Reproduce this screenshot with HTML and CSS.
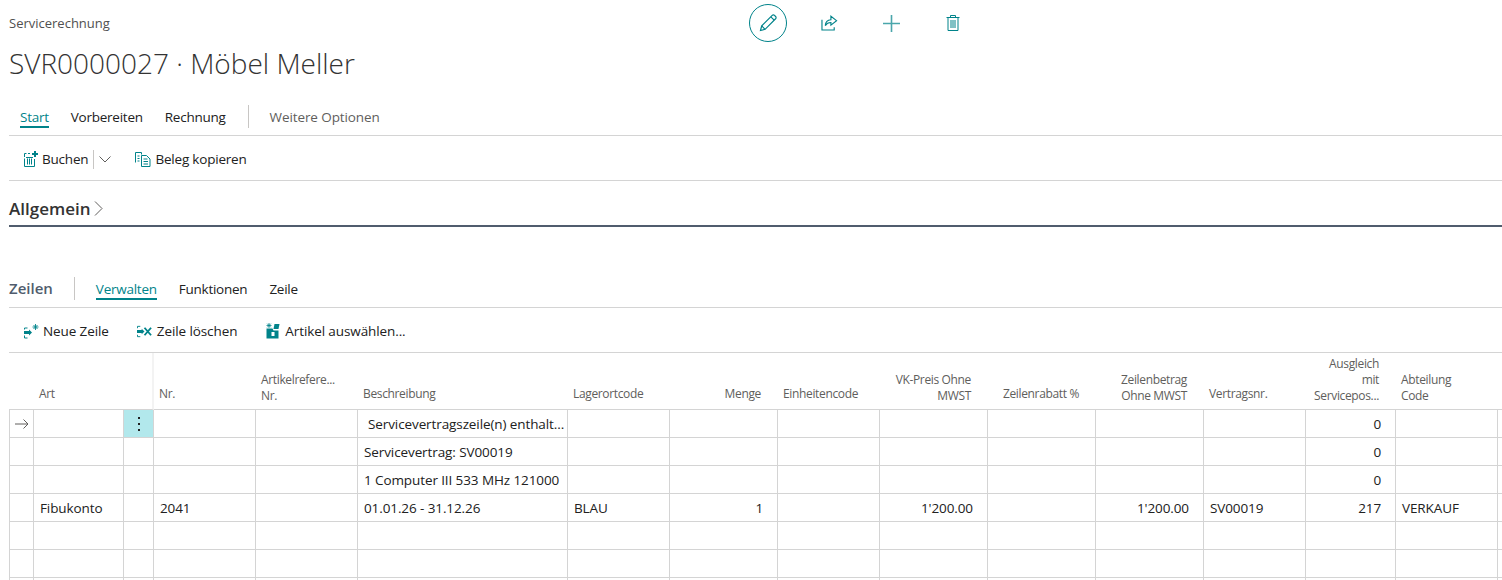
FILE: index.html
```html
<!DOCTYPE html>
<html lang="de">
<head>
    <meta charset="UTF-8">
    <title>Servicerechnung</title>
    <link rel="stylesheet" href="styles.css">
</head>
<body>
    <!-- Page header -->
    <header class="page-header">
        <div class="title-block">
            <div class="caption">Servicerechnung</div>
            <h1>SVR0000027 · Möbel Meller</h1>
        </div>
        <div class="page-actions">
            <span class="edit-btn">
                <svg width="20" height="20" viewBox="0 0 20 20" fill="none" stroke="#00838a" stroke-width="1.2"><path d="M2.5 17.5l1.2-4.6L14.2 2.4a1.6 1.6 0 0 1 2.3 0l1.1 1.1a1.6 1.6 0 0 1 0 2.3L7.100 16.300z"/><path d="M3.700 12.900l3.400 3.400M12.800 3.800l3.400 3.400"/></svg>
            </span>
            <span class="page-icon share-icon">
                <svg width="17" height="16" viewBox="0 0 18 17" fill="none" stroke="#00838a" stroke-width="1.2"><path d="M1 5v11h13v-3"/><path d="M10.500 1.300l6 4.700-6 4.700V8c-2.500 0-4.500.8-6 3.300.2-3.700 2.500-6.100 6-6.300z"/></svg>
            </span>
            <span class="page-icon plus-icon">
                <svg width="17" height="17" viewBox="0 0 17 17" stroke="#4aa6ab" stroke-width="1.6"><path d="M8.500 0v17M0 8.500h17"/></svg>
            </span>
            <span class="page-icon trash-icon">
                <svg width="14" height="16" viewBox="0 0 14 16" fill="none" stroke="#00838a" stroke-width="1"><path d="M.5 2.500h13M4.500 2.500V.5h5v2M2 2.500v13h10v-13M5 5v8M7 5v8M9 5v8"/></svg>
            </span>
        </div>
    </header>

    <!-- Main action tabs -->
    <nav class="tabs main-tabs">
        <a class="tab active">Start</a>
        <a class="tab">Vorbereiten</a>
        <a class="tab">Rechnung</a>
        <span class="tab-sep"></span>
        <a class="tab muted">Weitere Optionen</a>
    </nav>

    <div class="toolbar toolbar-top">
        <span class="tool tool-split">
            <svg width="15" height="16" viewBox="0 0 15 16" fill="none" stroke="#00838a"><path d="M.5 6V2.500h2M4 2.500h2M.5 7.500v8h10V8M3.500 7.500v6M5.500 7.500v6M7.500 7.500v6M2 6.500h7"/><path d="M11 0v6M8 3h6" stroke-width="2"/></svg>
            <span>Buchen</span>
        </span>
        <span class="split-sep"></span>
        <svg class="split-chevron" width="12" height="7" viewBox="0 0 12 7" fill="none" stroke="#605e5c"><path d="M.5.5L6 6l5.500-5.500"/></svg>
        <span class="tool tool-copy">
            <svg width="16" height="15" viewBox="0 0 16 15" fill="none" stroke="#00838a"><path d="M.5 10.500V.5h6v2M2.500 4h2M2.500 6.500h2M2.500 9h2"/><path d="M6.500 3.500h5l3.500 3.500v7.500H6.500zM8.500 7h4M8.500 9.500h4.500M8.500 12h4.500"/></svg>
            <span>Beleg kopieren</span>
        </span>
    </div>

    <!-- Allgemein section -->
    <section class="fasttab">
        <h2>Allgemein</h2>
        <svg width="9" height="15" viewBox="0 0 9 15" fill="none" stroke="#605e5c"><path d="M1 .5l7 7-7 7"/></svg>
    </section>

    <!-- Lines -->
    <nav class="tabs lines-tabs">
        <span class="lines-title">Zeilen</span>
        <span class="tab-sep"></span>
        <a class="tab active">Verwalten</a>
        <a class="tab">Funktionen</a>
        <a class="tab">Zeile</a>
    </nav>

    <div class="toolbar toolbar-lines">
        <span class="tool">
            <svg width="16" height="15" viewBox="0 0 16 15" fill="none" stroke="#00838a"><path d="M.5 5.500V4h3M.5 11.500V14h3"/><path d="M0 7h5V5.500L8 8.500l-3 3V10H0z" fill="#00838a" stroke="none"/><path d="M11.500 0v6M8.500 3h6M9.500 1l4 4M13.500 1l-4 4" stroke-width=".9"/></svg>
            <span>Neue Zeile</span>
        </span>
        <span class="tool">
            <svg width="15" height="13" viewBox="0 0 16 13" fill="none" stroke="#00838a"><path d="M.5 3V1h3M.5 10v2h3"/><path d="M0 5h5V3.500L8 6.500l-3 3V8H0z" fill="#00838a" stroke="none"/><path d="M8 2.500l7 8M15 2.500l-7 8" stroke-width="2"/></svg>
            <span>Zeile löschen</span>
        </span>
        <span class="tool">
            <svg width="15" height="16" viewBox="0 0 14 16"><path d="M1 5.500h6l1 2h5v8H1z" fill="#00838a"/><rect x="6" y="9" width="3" height="4" fill="#fff"/><path d="M9 1h5l-1 5H8z" fill="#00838a"/><path d="M3.500 0v5M1 2.500h5M1.700.7l3.600 3.600M5.300.7L1.700 4.300" stroke="#00838a" stroke-width=".8"/></svg>
            <span>Artikel auswählen...</span>
        </span>
    </div>

    <table class="lines">
        <colgroup>
            <col class="w25"><col class="w90"><col class="w30"><col class="w102"><col class="w102">
            <col class="w210"><col class="w102"><col class="w108"><col class="w102"><col class="w108">
            <col class="w108"><col class="w108"><col class="w102"><col class="w90"><col class="w102">
            <col class="w4">
        </colgroup>
        <thead>
            <tr>
                <th></th>
                <th>Art</th>
                <th class="freeze"></th>
                <th>Nr.</th>
                <th class="multi">Artikelrefere...<br>Nr.</th>
                <th>Beschreibung</th>
                <th>Lagerortcode</th>
                <th class="num">Menge</th>
                <th>Einheitencode</th>
                <th class="num multi">VK-Preis Ohne<br>MWST</th>
                <th class="num">Zeilenrabatt %</th>
                <th class="num multi">Zeilenbetrag<br>Ohne MWST</th>
                <th>Vertragsnr.</th>
                <th class="num multi">Ausgleich<br>mit<br>Servicepos...</th>
                <th class="multi">Abteilung<br>Code</th>
                <th class="end"></th>
            </tr>
        </thead>
        <tbody>
            <tr>
                <td class="marker"><svg width="14" height="10" viewBox="0 0 14 10" fill="none" stroke="#605e5c"><path d="M0 5h13M8.500.5L13 5l-4.500 4.500"/></svg></td>
                <td></td>
                <td class="row-menu"><span class="dots"><i></i><i></i><i></i></span></td>
                <td></td><td></td>
                <td class="indent">Servicevertragszeile(n) enthalt...</td>
                <td></td><td></td><td></td><td></td><td></td><td></td><td></td>
                <td class="num">0</td><td></td><td class="end"></td>
            </tr>
            <tr>
                <td></td><td></td><td></td><td></td><td></td>
                <td>Servicevertrag: SV00019</td>
                <td></td><td></td><td></td><td></td><td></td><td></td><td></td>
                <td class="num">0</td><td></td><td class="end"></td>
            </tr>
            <tr>
                <td></td><td></td><td></td><td></td><td></td>
                <td>1 Computer III 533 MHz 121000</td>
                <td></td><td></td><td></td><td></td><td></td><td></td><td></td>
                <td class="num">0</td><td></td><td class="end"></td>
            </tr>
            <tr>
                <td></td><td>Fibukonto</td><td></td><td>2041</td><td></td>
                <td>01.01.26 - 31.12.26</td>
                <td>BLAU</td>
                <td class="num">1</td>
                <td></td>
                <td class="num">1'200.00</td>
                <td></td>
                <td class="num">1'200.00</td>
                <td>SV00019</td>
                <td class="num">217</td>
                <td>VERKAUF</td><td class="end"></td>
            </tr>
            <tr><td></td><td></td><td></td><td></td><td></td><td></td><td></td><td></td><td></td><td></td><td></td><td></td><td></td><td></td><td></td><td class="end"></td></tr>
            <tr><td></td><td></td><td></td><td></td><td></td><td></td><td></td><td></td><td></td><td></td><td></td><td></td><td></td><td></td><td></td><td class="end"></td></tr>
            <tr><td></td><td></td><td></td><td></td><td></td><td></td><td></td><td></td><td></td><td></td><td></td><td></td><td></td><td></td><td></td><td class="end"></td></tr>
        </tbody>
    </table>
</body>
</html>
```

FILE: styles.css
```css
* {
    margin: 0;
    padding: 0;
    box-sizing: border-box;
}

html, body {
    height: 100%;
    overflow: hidden;
}

body {
    background-color: #fff;
    color: #212121;
    font-family: 'Open Sans', 'Noto Sans', sans-serif;
    font-size: 13.5px;
    letter-spacing: -0.1px;
    padding-left: 9px;
}

.page-header {
    display: flex;
    height: 98px;
}

.title-block {
    width: 740px;
}

.caption {
    font-size: 13px;
    letter-spacing: 0;
    color: #505050;
    padding-top: 14px;
    line-height: 18px;
}

h1 {
    font-size: 28px;
    font-weight: 300;
    line-height: 38px;
    margin-top: 12px;
    letter-spacing: 0;
    color: #333;
}

.page-actions {
    display: flex;
    align-items: center;
    height: 46px;
}

.edit-btn {
    width: 38px;
    height: 38px;
    border: 1px solid #00838a;
    border-radius: 50%;
    display: flex;
    align-items: center;
    justify-content: center;
}

.page-icon {
    display: flex;
}

.share-icon { margin-left: 34px; }
.plus-icon { margin-left: 45px; }
.trash-icon { margin-left: 46px; }

.tabs {
    display: flex;
    align-items: center;
    border-bottom: 1px solid #d4d4d4;
}

.main-tabs {
    height: 38px;
    padding-left: 11px;
}

.tab {
    height: 22px;
    line-height: 22px;
    margin-right: 22px;
    letter-spacing: -0.25px;
    color: #212121;
}

.tab.active {
    color: #00838a;
    border-bottom: 2px solid #00838a;
}

.tab.muted {
    color: #605e5c;
    letter-spacing: -0.1px;
}

.tab-sep {
    width: 1px;
    height: 23px;
    background-color: #c8c6c4;
    margin-right: 21px;
}

.toolbar {
    display: flex;
    align-items: center;
    border-bottom: 1px solid #d4d4d4;
}

.toolbar-top {
    height: 45px;
    padding-left: 15px;
    padding-top: 2px;
    letter-spacing: -0.2px;
}

.tool {
    display: flex;
    align-items: center;
    gap: 3px;
}

.split-sep {
    width: 1px;
    height: 19px;
    background-color: #c8c6c4;
    margin-left: 5px;
}

.split-chevron {
    margin-left: 5px;
}

.tool-copy {
    margin-left: 24px;
    gap: 4px;
}

.fasttab {
    display: flex;
    align-items: center;
    gap: 3px;
    height: 46px;
    border-bottom: 2px solid #505c6d;
    padding-top: 10px;
}

h2 {
    font-size: 17px;
    font-weight: 600;
    color: #333;
    letter-spacing: 0;
}

.lines-tabs {
    height: 81px;
    padding-top: 43px;
}

.lines-title {
    font-size: 15px;
    font-weight: 600;
    color: #505c6d;
    margin-right: 21px;
    margin-bottom: 2px;
    letter-spacing: 0;
}

.toolbar-lines {
    height: 45px;
    padding-left: 15px;
    padding-top: 2px;
    gap: 28px;
}

.toolbar-lines .tool + .tool {
    gap: 5px;
}

.lines {
    border-collapse: separate;
    border-spacing: 0;
    table-layout: fixed;
    width: 1493px;
}

.w4 { width: 4px; }
.w25 { width: 25px; }
.w30 { width: 30px; }
.w90 { width: 90px; }
.w102 { width: 102px; }
.w108 { width: 108px; }
.w210 { width: 210px; }

.lines th {
    height: 57px;
    font-size: 12px;
    font-weight: 400;
    letter-spacing: -0.35px;
    color: #605e5c;
    text-align: left;
    vertical-align: bottom;
    line-height: 16px;
    padding: 0 5px 7px;
    border-bottom: 1px solid #d4d4d4;
    white-space: nowrap;
    overflow: hidden;
}

.lines th.multi {
    padding-bottom: 5px;
}

.lines th.num {
    text-align: right;
    padding-right: 17px;
}

.lines th.freeze {
    border-right: 2px solid #f3f3f3;
}

.lines td {
    height: 28px;
    padding: 0 6px;
    border-right: 1px solid #d4d4d4;
    border-bottom: 1px solid #d4d4d4;
    white-space: nowrap;
    overflow: hidden;
}

.lines td:first-child {
    border-left: 1px solid #d4d4d4;
}

.lines td.num {
    text-align: right;
    padding-right: 14px;
}

.lines td.indent {
    padding-left: 10px;
}

.lines td.end {
    border-right: none;
}

.lines td.marker {
    padding: 0 0 0 5px;
}

.marker svg {
    display: block;
}

.lines td.row-menu {
    background-color: #b2e8ec;
    padding: 0;
}

.dots {
    display: flex;
    flex-direction: column;
    align-items: center;
    gap: 4px;
}

.dots i {
    width: 2px;
    height: 2px;
    background-color: #212121;
}
```
